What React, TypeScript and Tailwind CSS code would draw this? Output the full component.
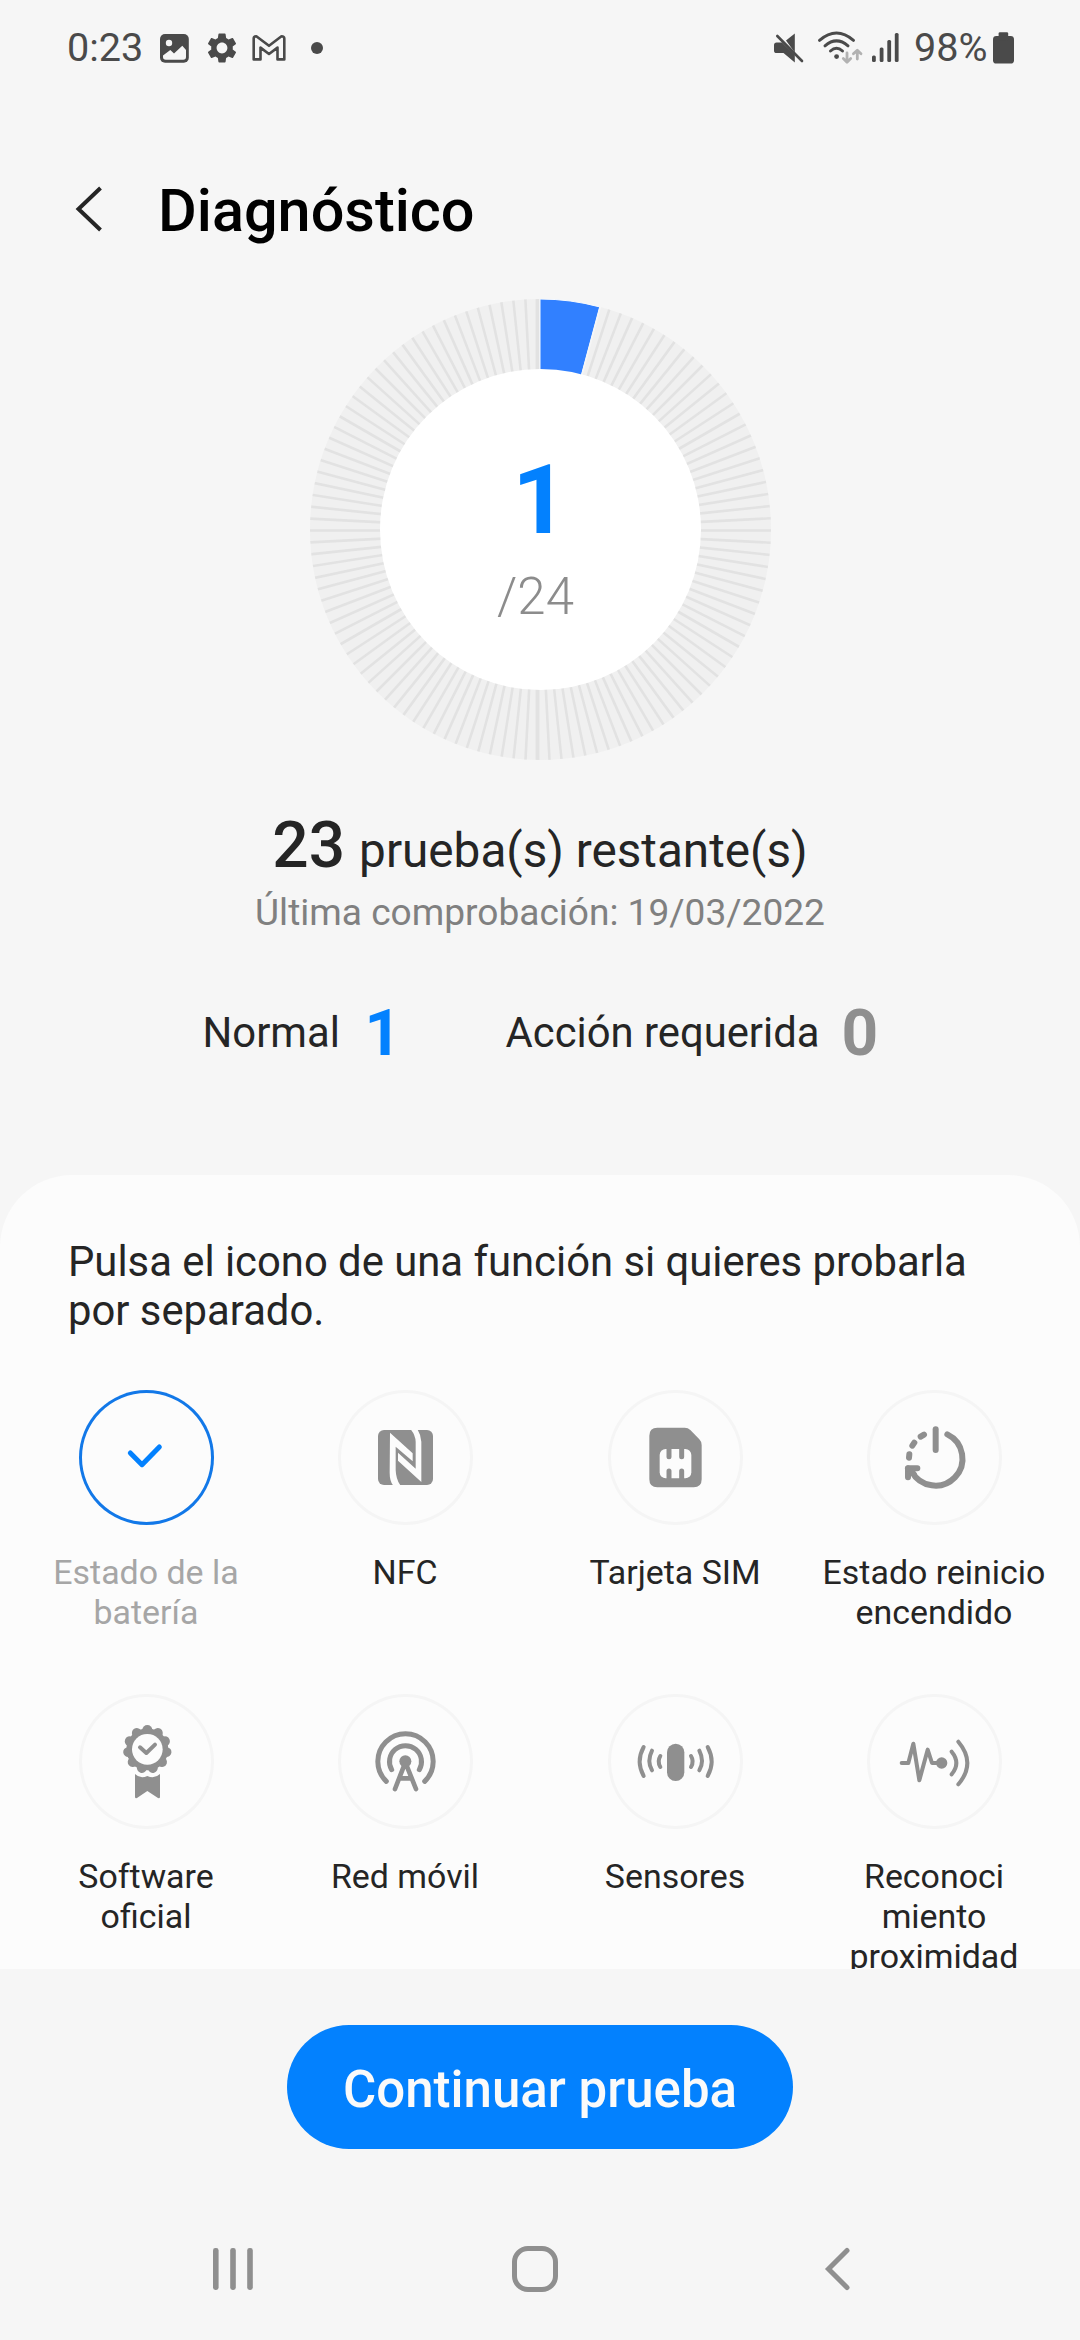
import type { ReactNode } from 'react';
import clsx from 'clsx';
import { MdSettings } from 'react-icons/md';

const TOTAL = 24;
const DONE = 1;

const StatusBar = () => (
  <div className="flex h-[95px] shrink-0 items-center text-[39.6px] leading-none text-[#4a4a4a]">
    <span className="ml-[67px] w-[93px]">0:23</span>

    {/* Notifications */}
    <svg className="h-[95px] w-[29px]" viewBox="160 0 29 95" fill="none">
      <rect x="160" y="34" width="28.8" height="28.8" rx="5" fill="currentColor" />
      <circle cx="169" cy="43" r="3.2" fill="#f6f6f6" />
      <path d="M163 55.5L170.3 50L174 53.5L182.3 45.8L186 50V57Q186 59.8 183.2 59.8H165.8Q163 59.8 163 57Z" fill="#f6f6f6" />
    </svg>
    <MdSettings className="ml-[14.5px] h-9 w-9" />
    <svg className="ml-[12px] h-[95px] w-[34px]" viewBox="251.5 0 34 95" fill="none">
      <path
        d="M253.2 38.5Q253.2 36.2 255.8 36.2L268.5 45.8L281 36.2Q283.8 36.2 283.8 38.5V59.4H277V47.6L268.5 54L260 47.6V59.4H253.2Z"
        stroke="currentColor"
        strokeWidth="2.6"
        strokeLinejoin="round"
      />
    </svg>
    <div className="ml-[25.5px] h-3 w-3 rounded-full bg-[#4a4a4a]" />

    {/* System */}
    <svg className="ml-[449.5px] h-[95px] w-[32px]" viewBox="772 0 32 95" fill="currentColor">
      <path d="M793.8 33.5V52.5L785 40.5Z" />
      <path d="M773 45Q773 42.4 775.6 42.4H781L793.8 55V62.5L782.5 53H775.6Q773 53 773 50.4Z" />
      <path d="M776.3 36L801 61" stroke="currentColor" strokeWidth="2.6" strokeLinecap="round" />
    </svg>
    <svg className="ml-[12px] h-[95px] w-[47px]" viewBox="816 0 47 95" fill="none">
      <g stroke="currentColor" strokeWidth="3" strokeLinecap="round">
        <path d="M818.5 40.3Q835.5 25.6 852.5 40.3" />
        <path d="M824 45.8Q835.5 36 847 45.8" />
        <path d="M829.5 51Q835.5 45.4 841.5 51" />
      </g>
      <circle cx="835.6" cy="56.6" r="2.4" fill="currentColor" />
      <g stroke="#b2b2b2" strokeWidth="2.8" strokeLinecap="round" strokeLinejoin="round">
        <path d="M846 53V62M842.3 58.6L846 62.2L849.7 58.6" />
        <path d="M856.3 59V50.5M852.4 53.8L856.3 50.2L860 53.8" />
      </g>
    </svg>
    <svg className="ml-[7px] h-[95px] w-[30px]" viewBox="870 0 30 95" fill="currentColor">
      <rect x="871" y="55.5" width="3.8" height="6.5" rx="1.5" />
      <rect x="878.7" y="47.5" width="3.8" height="14.5" rx="1.5" />
      <rect x="886.3" y="40" width="3.8" height="22" rx="1.5" />
      <rect x="893.8" y="33" width="3.8" height="29" rx="1.5" />
    </svg>
    <span className="ml-[13.5px] w-[77.5px]">98%</span>
    <svg className="h-[95px] w-[23px]" viewBox="991 0 23 95" fill="currentColor">
      <rect x="992" y="36" width="21" height="27.6" rx="3.4" />
      <rect x="997.6" y="32.2" width="9.6" height="8" rx="1.4" />
    </svg>
  </div>
);

const Header = () => (
  <header className="mt-[30px] flex h-[174px] shrink-0 items-center">
    <svg className="-mt-[6px] ml-[74px] h-[50px] w-[30px]" viewBox="74 184 30 50" fill="none" stroke="#252525" strokeWidth="4">
      <path d="M100.5 188L78.5 209L100.5 230" />
    </svg>
    <h1 className="ml-[54px] text-[59.4px] font-medium leading-none text-black">Diagnóstico</h1>
  </header>
);

const ticks = Array.from({ length: 120 }, (_, i) => i * 3);

const ProgressRing = () => (
  <div className="relative h-[461px] w-[461px] shrink-0 self-center">
    <svg className="h-full w-full" viewBox="0 0 461 461">
      <defs>
        <clipPath id="ring">
          <circle cx="230.5" cy="230.5" r="230.5" />
        </clipPath>
      </defs>
      <circle cx="230.5" cy="230.5" r="230.5" fill="#f0f0f0" />
      <g clipPath="url(#ring)" stroke="#e2e2e2">
        {ticks.map((deg) => (
          <line
            key={deg}
            x1="227.5"
            x2="227.5"
            y1="-10"
            y2="120"
            strokeWidth={deg % 180 === 0 ? 3.8 : 2.6}
            transform={`rotate(${deg} 227.5 231.5)`}
          />
        ))}
      </g>
      <path d="M230 230.5V0A230.5 230.5 0 0 1 289.7 7.9Z" fill="#3180ff" stroke="#f8fbff" strokeWidth="1" />
      <path d="M290.3 7.9L230.2 230.5" stroke="#f6f6f6" strokeWidth="1.5" />
      <circle cx="230.5" cy="230.5" r="160.5" fill="#fff" />
    </svg>
    <div className="absolute inset-0 flex flex-col items-center pt-[153px]">
      <span className="text-[96.6px] font-bold leading-[96px] text-[#0381fe]">{DONE}</span>
      <span className="mt-[19px] pr-[9px] text-[51px] font-light leading-[60px] text-[#8c8c8c]">/{TOTAL}</span>
    </div>
  </div>
);

const Summary = () => (
  <section className="flex flex-col items-center text-[#252525]">
    <p className="mt-[51px] flex h-[70px] items-baseline gap-[14px] leading-[70px]">
      <span className="text-[64px] font-medium">{TOTAL - DONE}</span>
      <span className="text-[47.7px]">prueba(s) restante(s)</span>
    </p>
    <p className="mt-[7px] text-[37.1px] leading-[50px] text-[#808080]">Última comprobación: 19/03/2022</p>
    <div className="mt-[63px] flex h-16 items-center self-stretch text-[41.8px] leading-none">
      <span className="ml-[202.5px] w-[162px]">Normal</span>
      <span className="w-[141px] pt-[2px] text-[64px] font-bold text-[#0381fe]">1</span>
      <span className="w-[336px]">Acción requerida</span>
      <span className="pt-[2px] text-[64px] font-bold text-[#8f8f8f]">0</span>
    </div>
  </section>
);

// Icons share a 405 unit box that fills the whole circle
const CheckIcon = () => (
  <path d="M154 189L189 224L241 171" fill="none" stroke="#0381fe" strokeWidth="15" strokeLinecap="round" strokeLinejoin="round" />
);

const NfcIcon = () => (
  <>
    <rect x="120" y="120" width="165" height="165" rx="18" />
    <g fill="#fcfcfc">
      <path d="M156 128L224 190V214L173 170V240Q174 268 187 286H165Q155 272 155 248Z" />
      <path d="M180 188L233 236V155Q232 135 219 119H239Q249 135 250 155V276L180 212Z" />
    </g>
  </>
);

const SimIcon = () => (
  <>
    <path d="M148 113H230Q240 113 247 120L274 148Q281 155 281 165V268Q281 292 257 292H148Q124 292 124 268V137Q124 113 148 113Z" />
    <rect x="155" y="177" width="95" height="88" rx="18" fill="#fcfcfc" />
    <path d="M183 172V200M221 172V200M183 243V270M221 243V270" stroke="#8f8f8f" strokeWidth="15" strokeLinecap="round" />
  </>
);

const RestartIcon = () => (
  <g fill="none" stroke="#8f8f8f" strokeWidth="18" strokeLinecap="round" strokeLinejoin="round">
    <path d="M206 118V180" />
    <path d="M241 133A81 81 0 1 1 134 244" />
    <path d="M123 262V235H151" />
    <path d="M123 235L140 252" />
    <path d="M161 140L171 134M136 167L142 158M126 203L127 193" />
  </g>
);

const petals = Array.from({ length: 11 }, (_, i) => (i * 360) / 11);

const CertifiedIcon = () => (
  <>
    <circle cx="205" cy="166" r="63" />
    {petals.map((deg) => (
      <circle key={deg} cx="205" cy="108" r="15" transform={`rotate(${deg} 205 166)`} />
    ))}
    <circle cx="205" cy="166" r="46" fill="#fcfcfc" />
    <path d="M183 160L202 177L228 152" fill="none" stroke="#8f8f8f" strokeWidth="12" strokeLinecap="round" strokeLinejoin="round" />
    <path d="M168 240Q184 256 205 246Q226 256 243 240V308Q243 314 237 312L205 291L174 312Q168 314 168 308Z" />
  </>
);

const NetworkIcon = () => (
  <>
    <g fill="none" stroke="#8f8f8f" strokeWidth="15" strokeLinecap="round">
      <path d="M145 262A83 83 0 1 1 260 262" />
      <path d="M161 227A48 48 0 1 1 244 227" />
      <path d="M202 205L171 285M202 205L234 285M186 253H220" strokeWidth="14" />
    </g>
    <circle cx="202" cy="202" r="18" />
  </>
);

const SensorsIcon = () => (
  <>
    <rect x="177" y="149" width="52" height="112" rx="26" />
    <g fill="none" stroke="#8f8f8f" strokeWidth="12" strokeLinecap="round">
      <path d="M249 186Q259 202 249 219M274 170Q290 202 274 229M299 159Q323 203 299 246" />
      <path d="M157 186Q147 202 157 219M132 170Q116 202 132 229M107 159Q83 203 107 246" />
    </g>
  </>
);

const ProximityIcon = () => (
  <>
    <g fill="none" stroke="#8f8f8f" strokeWidth="12" strokeLinecap="round" strokeLinejoin="round">
      <path d="M104 207H124L139 149L157 259L182 167L195 207H224" />
      <path d="M254 173Q282 207 254 241M274 143Q328 207 274 271" />
    </g>
    <circle cx="224" cy="207" r="17" />
  </>
);

type Test = { lines: string[]; icon: ReactNode; done?: boolean };

const leftTests: Test[] = [
  { lines: ['Estado de la', 'batería'], icon: <CheckIcon />, done: true },
  { lines: ['NFC'], icon: <NfcIcon /> },
  { lines: ['Software', 'oficial'], icon: <CertifiedIcon /> },
  { lines: ['Red móvil'], icon: <NetworkIcon /> },
];

const rightTests: Test[] = [
  { lines: ['Tarjeta SIM'], icon: <SimIcon /> },
  { lines: ['Estado reinicio', 'encendido'], icon: <RestartIcon /> },
  { lines: ['Sensores'], icon: <SensorsIcon /> },
  { lines: ['Reconoci', 'miento', 'proximidad'], icon: <ProximityIcon /> },
];

const TestItem = ({ lines, icon, done }: Test) => (
  <button className="flex h-[304px] flex-col items-center">
    <span
      className={clsx(
        'h-[135px] w-[135px] shrink-0 rounded-full ring-[3px] ring-inset',
        done ? 'ring-[#1278e8]' : 'ring-[#f5f5f5]'
      )}
    >
      <svg className="h-full w-full" viewBox="0 0 405 405" fill="#8f8f8f">
        {icon}
      </svg>
    </span>
    <span className={clsx('mt-[28px] text-[33.9px] leading-10', done ? 'text-[#a6a6a6]' : 'text-[#252525]')}>
      {lines.map((line) => (
        <span key={line} className="block whitespace-nowrap">{line}</span>
      ))}
    </span>
  </button>
);

const TestPanel = () => (
  <section className="mt-[110px] h-[794px] shrink-0 overflow-hidden rounded-t-[72px] bg-[#fcfcfc] pt-[62px]">
    <p className="pl-[68px] text-[41.8px] leading-[49px] text-[#252525]">
      Pulsa el icono de una función si quieres probarla
      <br />
      por separado.
    </p>
    <div className="mt-[55px] flex justify-center gap-[11px]">
      {[leftTests, rightTests].map((tests, i) => (
        <div key={i} className="grid grid-cols-[259px_259px]">
          {tests.map((test) => (
            <TestItem key={test.lines[0]} {...test} />
          ))}
        </div>
      ))}
    </div>
  </section>
);

const NavigationBar = () => (
  <nav className="mt-[50px] flex h-[140px] shrink-0 items-center">
    <svg className="ml-[213px] h-[50px] w-10" viewBox="0 0 40 50" fill="#8f8f8f">
      <rect x="0" y="4" width="5.6" height="42" rx="2.4" />
      <rect x="17.2" y="4" width="5.6" height="42" rx="2.4" />
      <rect x="34.2" y="4" width="5.6" height="42" rx="2.4" />
    </svg>
    <div className="ml-[259px] h-[46px] w-[46px] rounded-[16px] border-[5.5px] border-[#8f8f8f]" />
    <svg className="ml-[266px] h-[50px] w-7" viewBox="824 2244 28 50" fill="none" stroke="#8f8f8f" strokeWidth="5" strokeLinecap="round">
      <path d="M847 2250.5L828.5 2269L847 2287.5" />
    </svg>
  </nav>
);

const App = () => {
  return (
    <div className="flex h-[2340px] w-[1080px] flex-col overflow-hidden bg-[#f6f6f6] font-[Roboto,sans-serif]">
      <StatusBar />
      <Header />
      <ProgressRing />
      <Summary />
      <TestPanel />
      <button className="mt-[56px] h-[124px] w-[506px] shrink-0 self-center rounded-full bg-[#0381fe] pt-[5px] text-[51px] font-medium leading-none text-[#fafafa]">
        Continuar prueba
      </button>
      <NavigationBar />
    </div>
  );
};

export default App;
